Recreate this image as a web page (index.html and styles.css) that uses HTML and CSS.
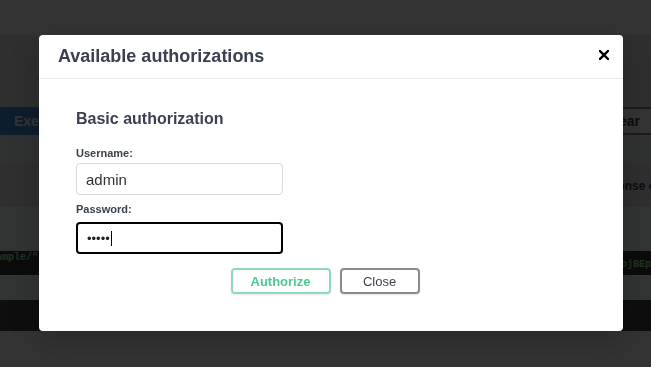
FILE: index.html
```html
<!DOCTYPE html>
<html lang="en">
<head>
  <meta charset="UTF-8">
  <meta name="viewport" content="width=device-width, initial-scale=1.0">
  <title>API Docs</title>
  <link rel="stylesheet" href="styles.css">
</head>
<body>

  <!-- page behind the dialog -->
  <div class="page">
    <div class="band top-band"></div>
    <div class="band op-band"></div>
    <div class="execute-row">
      <div class="btn-execute">Execute</div>
      <div class="btn-clear">Clear</div>
    </div>
    <div class="band section-head"></div>
    <div class="band content-type">
      <span class="ct-label">Response content type</span>
    </div>
    <div class="band light-band"></div>
    <div class="code-block">
      <span class="code-left">ample/" -H "accept: application/json"</span>
      <span class="code-right">ojBEp</span>
    </div>
    <div class="band light-band short"></div>
    <div class="code-block dark"></div>
    <div class="band top-band"></div>
  </div>

  <div class="overlay"></div>

  <!-- Authorization dialog -->
  <div class="modal">
    <div class="modal-header">
      <h3>Available authorizations</h3>
      <button class="close-modal" aria-label="Close">
        <svg width="10" height="10" viewBox="0 0 10 10">
          <path d="M1 1 L9 9 M9 1 L1 9" stroke="#000" stroke-width="2.4" stroke-linecap="square"/>
        </svg>
      </button>
    </div>
    <div class="modal-body">
      <h4>Basic authorization</h4>
      <label class="field-label" for="username">Username:</label>
      <input class="field" id="username" type="text" value="admin">
      <label class="field-label pass-label" for="password">Password:</label>
      <div class="field focused" id="password"><span class="dots">&bull;&bull;&bull;&bull;&bull;</span><span class="caret"></span></div>
      <div class="auth-btn-wrapper">
        <button class="btn authorize">Authorize</button>
        <button class="btn btn-done">Close</button>
      </div>
    </div>
  </div>

</body>
</html>
```

FILE: styles.css
```css
body {
  margin: 0;
  font-family: "Liberation Sans", Arial, sans-serif;
  background: #fff;
  overflow: hidden;
}

.page {
  width: 100%;
}

.band {
  width: 100%;
}

.top-band {
  height: 35px;
  background: #fff;
}

.op-band {
  height: 72px;
  background: #e8ecf0;
}

.execute-row {
  display: flex;
  height: 28px;
}

.btn-execute {
  flex: 1;
  background: #4990e2;
  color: #fff;
  font-weight: bold;
  font-size: 14px;
  line-height: 28px;
  padding-left: 14px;
}

.btn-clear {
  flex: 1;
  border: 2px solid #8a8a8a;
  border-right: none;
  color: #3b4151;
  font-weight: bold;
  font-size: 14px;
  line-height: 24px;
  text-align: right;
  padding-right: 11px;
}

.section-head {
  height: 27px;
  background: #f0f3f6;
}

.content-type {
  height: 45px;
  background: #e8ecf0;
}

.ct-label {
  display: block;
  padding-left: 588px;
  padding-top: 17px;
  font-size: 12px;
  font-weight: bold;
  color: #3b4151;
  white-space: nowrap;
}

.light-band {
  height: 44px;
  background: #fafcff;
}

.light-band.short {
  height: 25px;
}

.code-block {
  height: 24px;
  background: #3a3a3a;
  display: flex;
  justify-content: space-between;
  overflow: hidden;
  font-family: "Liberation Mono", monospace;
  font-size: 10px;
  font-weight: bold;
  color: #a2fca2;
  white-space: nowrap;
}

.code-block.dark {
  height: 31px;
  background: #484848;
}

.code-left {
  margin-left: -4px;
  padding-top: 1px;
}

.code-right {
  padding-top: 8px;
}

.overlay {
  position: fixed;
  inset: 0;
  background: rgba(0, 0, 0, 0.8);
}

/* dialog */
.modal {
  position: absolute;
  left: 39px;
  top: 35px;
  width: 584px;
  height: 296px;
  background: #fff;
  border-radius: 4px;
  box-shadow: 0 10px 30px rgba(0, 0, 0, 0.2);
  color: #3b4151;
}

.modal-header {
  display: flex;
  justify-content: space-between;
  align-items: center;
  height: 43px;
  padding: 0 14px 0 19px;
  border-bottom: 1px solid #ebebeb;
}

.modal-header h3 {
  margin: 0;
  font-size: 18px;
  letter-spacing: 0;
  font-weight: bold;
  color: #3b4151;
}

.close-modal {
  background: none;
  border: none;
  padding: 0;
  width: 10px;
  height: 10px;
  margin-top: -3px;
  cursor: pointer;
}

.close-modal svg {
  display: block;
}

.modal-body {
  padding: 31px 37px 0;
}

.modal-body h4 {
  margin: 0;
  font-size: 16px;
  line-height: 18px;
  font-weight: bold;
  color: #3b4151;
}

.field-label {
  display: block;
  margin-top: 19px;
  font-size: 11px;
  line-height: 13px;
  font-weight: bold;
  color: #3b4151;
}

.pass-label {
  margin-top: 8px;
}

.field {
  display: block;
  box-sizing: border-box;
  width: 207px;
  height: 32px;
  margin: 3px 0 0;
  padding: 0 9px;
  border: 1px solid #d9d9d9;
  border-radius: 4px;
  background: #fff;
  font-family: "Liberation Sans", Arial, sans-serif;
  font-size: 15px;
  color: #333;
  outline: none;
}

.field.focused {
  margin-top: 6px;
  border: 2px solid #000;
  display: flex;
  align-items: center;
  padding: 0 9px;
}

.dots {
  font-size: 13px;
  color: #222;
}

.caret {
  display: inline-block;
  width: 1px;
  height: 15px;
  margin-left: 1px;
  background: #000;
}

.auth-btn-wrapper {
  display: flex;
  justify-content: center;
  margin-top: 14px;
}

.btn {
  box-sizing: border-box;
  height: 26px;
  border-radius: 4px;
  background: transparent;
  font-family: "Liberation Sans", Arial, sans-serif;
  font-size: 13px;
  box-shadow: 0 1px 2px rgba(0, 0, 0, 0.1);
  cursor: pointer;
}

.authorize {
  width: 100px;
  border: 2px solid #8ddcb7;
  color: #49cc90;
  font-weight: bold;
  margin-right: 9px;
}

.btn-done {
  width: 80px;
  border: 2px solid #8a8a8a;
  color: #3b4151;
  margin-right: 12px;
}
```
